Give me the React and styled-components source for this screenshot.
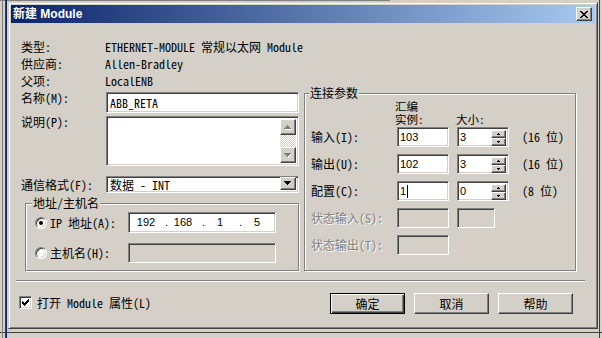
import React from "react";
import styled, { createGlobalStyle } from "styled-components";

const FACE = "#d4d0c8";
const SONG = `"Noto Sans Mono CJK SC", "Liberation Mono", "Noto Sans CJK SC", monospace`;
const SANS = `"Liberation Sans", "Noto Sans CJK SC", sans-serif`;

const Global = createGlobalStyle`
  html, body { margin: 0; padding: 0; background: ${FACE}; }
  body { width: 602px; height: 338px; overflow: hidden; font-family: ${SONG}; font-size: 12px; line-height: 12px; color: #000; }
  * { box-sizing: border-box; }
`;

const Screen = styled.div`
  width: 602px;
  height: 338px;
  padding: 2px 0 0 8px;
  display: flex;
  background:
    linear-gradient(to right, transparent 2px, #808080 2px, #808080 3px, transparent 3px, transparent 5px, #404040 5px, #404040 6px, #0a246a 6px, #0a246a 7px, transparent 7px) left top / 8px 100% no-repeat,
    linear-gradient(#404040, #404040) 0 332px / 602px 1px no-repeat,
    linear-gradient(to right, transparent 1px, #404040 1px, #404040 2px, transparent 2px) 598px 0 / 4px 100% no-repeat,
    linear-gradient(#808080, #808080) 0 0 / 390px 1px no-repeat,
    ${FACE};
`;

const Dialog = styled.div`
  width: 590px;
  height: 327px;
  background: ${FACE};
  border: 1px solid;
  border-color: ${FACE} #404040 #404040 ${FACE};
  box-shadow: inset 1px 1px 0 #fff, inset -1px -1px 0 #808080;
  padding: 2px;
  display: flex;
  flex-direction: column;
`;

const TitleBar = styled.div`
  height: 18px;
  flex: none;
  display: flex;
  align-items: center;
  justify-content: space-between;
  padding: 0 3px 0 2px;
  background: linear-gradient(to right, #0a246a, #a6caf0);
`;

const TitleText = styled.span`
  color: #fff;
  font-family: ${SANS};
  font-weight: bold;
  font-size: 12px;
  line-height: 14px;
`;

const Raised = styled.div`
  background: ${FACE};
  border: 1px solid;
  border-color: #fff #404040 #404040 #fff;
  box-shadow: inset -1px -1px 0 #808080;
  display: flex;
  align-items: center;
  justify-content: center;
`;

const CloseBtn = styled(Raised)`
  width: 16px;
  height: 14px;
`;

const Svg = styled.svg`
  display: block;
  flex: none;
`;

const Body = styled.div`
  flex: 1;
  display: flex;
  flex-direction: column;
`;

const Top = styled.div`
  padding: 15px 19px 0 10px;
`;

const Info = styled.div`
  display: grid;
  grid-template-columns: 84px 1fr;
  grid-auto-rows: 17px;
  align-items: center;
  white-space: nowrap;
`;

const Text = styled.span`
  white-space: nowrap;
  color: ${p => (p.$disabled ? "#808080" : "#000")};
  text-shadow: ${p => (p.$disabled ? "1px 1px 0 #fff" : "none")};
`;

const Main = styled.div`
  display: flex;
  gap: 5px;
  align-items: flex-start;
`;

const LeftCol = styled.div`
  width: 278px;
  padding-top: 3px;
  display: flex;
  flex-direction: column;
`;

const FormRow = styled.div`
  display: flex;
  align-items: ${p => (p.$center ? "center" : "flex-start")};
  margin-bottom: ${p => p.$mb || 0}px;
`;

const RowLabel = styled.span`
  width: 85px;
  flex: none;
  white-space: nowrap;
`;

const Field = styled.div`
  position: relative;
  flex: none;
  width: ${p => p.$w}px;
  height: ${p => p.$h || 20}px;
  background: ${p => (p.$disabled ? FACE : "#fff")};
  border: 1px solid;
  border-color: #808080 #fff #fff #808080;
  box-shadow: inset 1px 1px 0 #404040, inset -1px -1px 0 ${FACE};
  display: flex;
  align-items: ${p => (p.$top ? "stretch" : "center")};
  padding: ${p => p.$pad || "0 2px 0 2px"};
  overflow: hidden;
`;

const Num = styled.span`
  font-family: ${SANS};
  font-size: 11px;
  line-height: 13px;
  white-space: nowrap;
`;

const Caret = styled.span`
  width: 1px;
  height: 13px;
  background: #000;
  margin-left: 1px;
`;

const ScrollBar = styled.div`
  margin-left: auto;
  width: 16px;
  display: flex;
  flex-direction: column;
  background: repeating-conic-gradient(#fff 0 25%, ${FACE} 0 50%) 0 0 / 2px 2px;
`;

const ScrollBtn = styled(Raised)`
  width: 16px;
  height: ${p => p.$h || 16}px;
  flex: none;
`;

const Track = styled.div`
  flex: 1;
`;

const Group = styled.div`
  position: relative;
  border: 1px solid #808080;
  box-shadow: inset 1px 1px 0 #fff, 1px 1px 0 #fff;
  padding: ${p => p.$pad};
  margin: ${p => p.$margin || 0};
  width: ${p => p.$w}px;
`;

const Caption = styled.span`
  position: absolute;
  top: -7px;
  left: ${p => p.$left}px;
  padding: 0 1px;
  background: ${FACE};
  line-height: 12px;
  white-space: nowrap;
`;

const AddrRow = styled.div`
  display: flex;
  align-items: center;
  height: ${p => p.$h}px;
  margin-bottom: ${p => p.$mb || 0}px;
`;

const RadioBox = styled.span`
  width: 12px;
  height: 12px;
  border-radius: 50%;
  border: 1px solid;
  border-color: #808080 #fff #fff #808080;
  box-shadow: inset 1px 1px 0 #404040, inset -1px -1px 0 ${FACE};
  background: #fff;
  display: flex;
  align-items: center;
  justify-content: center;
  margin-right: 3px;
  flex: none;
`;

const Dot = styled.span`
  width: 4px;
  height: 4px;
  border-radius: 50%;
  background: #000;
`;

const AddrLabel = styled.span`
  width: 78px;
  flex: none;
  white-space: nowrap;
`;

const Octet = styled.span`
  width: 30px;
  text-align: center;
  font-family: ${SANS};
  font-size: 11px;
  line-height: 13px;
`;

const IpDot = styled.span`
  width: 7px;
  text-align: right;
  font-family: ${SANS};
  font-size: 11px;
  line-height: 13px;
`;

const ConnHeader = styled.div`
  display: grid;
  grid-template-columns: 78px 52px 52px;
  column-gap: 8px;
  height: 27px;
  align-items: end;
  padding-bottom: 2px;
`;

const HeadCell = styled.div`
  margin-left: ${p => p.$ml || 0}px;
  display: flex;
  flex-direction: column;
`;

const HeadLine = styled.span`
  height: 13px;
  line-height: 13px;
  font-size: 11.5px;
  white-space: nowrap;
`;

const ConnGrid = styled.div`
  display: grid;
  grid-template-columns: 78px 52px 52px auto;
  column-gap: 8px;
  grid-auto-rows: 20px;
  row-gap: 7px;
  align-items: center;
`;

const Bits = styled.span`
  padding-left: 5px;
  white-space: nowrap;
`;

const SpinCol = styled.div`
  margin-left: auto;
  display: flex;
  flex-direction: column;
  align-self: stretch;
`;

const SpinBtn = styled(Raised)`
  width: 15px;
  height: 8px;
  flex: none;
`;

const Separator = styled.div`
  margin: 9px 10px 0 5px;
  height: 2px;
  border-top: 1px solid #808080;
  border-bottom: 1px solid #fff;
`;

const Footer = styled.div`
  padding: 11px 22px 0 8px;
  display: flex;
  align-items: center;
  justify-content: space-between;
`;

const CheckLabel = styled.div`
  display: flex;
  align-items: center;
  gap: 5px;
  margin-top: -2px;
`;

const CheckBox = styled.span`
  width: 13px;
  height: 13px;
  border: 1px solid;
  border-color: #808080 #fff #fff #808080;
  box-shadow: inset 1px 1px 0 #404040, inset -1px -1px 0 ${FACE};
  background: #fff;
  display: flex;
  align-items: center;
  justify-content: center;
`;

const Buttons = styled.div`
  display: flex;
  gap: 9px;
`;

const Button = styled.div`
  width: 75px;
  height: 21px;
  background: ${FACE};
  border: 1px solid;
  border-color: ${p => (p.$default ? "#000" : "#fff #404040 #404040 #fff")};
  box-shadow: ${p =>
    p.$default
      ? "inset 1px 1px 0 #fff, inset -1px -1px 0 #404040, inset -2px -2px 0 #808080"
      : "inset -1px -1px 0 #808080"};
  display: flex;
  align-items: center;
  justify-content: center;
  font-family: "Noto Sans CJK SC", sans-serif;
  font-size: 12px;
`;

const Tri = ({ dir = "down", w = 7, h = 4, color = "#000", shadow = false }) => {
  const pts = dir === "down" ? `0,0 ${w},0 ${w / 2},${h}` : `0,${h} ${w},${h} ${w / 2},0`;
  return (
    <Svg width={w + 1} height={h + 1} viewBox={`0 0 ${w + 1} ${h + 1}`} shapeRendering="crispEdges">
      {shadow && <polygon points={pts} fill="#fff" transform="translate(1,1)" />}
      <polygon points={pts} fill={color} />
    </Svg>
  );
};

const CloseX = () => (
  <Svg width="8" height="7" viewBox="0 0 8 7" shapeRendering="crispEdges">
    <path d="M0 0h2v1h-2zM6 0h2v1h-2zM1 1h2v1h-2zM5 1h2v1h-2zM2 2h4v1h-4zM3 3h2v1h-2zM2 4h4v1h-4zM1 5h2v1h-2zM5 5h2v1h-2zM0 6h2v1h-2zM6 6h2v1h-2z" fill="#000" />
  </Svg>
);

const Check = () => (
  <Svg width="7" height="7" viewBox="0 0 7 7" shapeRendering="crispEdges">
    <path d="M0 2h1v3h-1zM1 3h1v3h-1zM2 4h1v3h-1zM3 3h1v3h-1zM4 2h1v3h-1zM5 1h1v3h-1zM6 0h1v3h-1z" fill="#000" />
  </Svg>
);

const Spin = () => (
  <SpinCol>
    <SpinBtn><Tri dir="up" w={4} h={2} /></SpinBtn>
    <SpinBtn><Tri dir="down" w={4} h={2} /></SpinBtn>
  </SpinCol>
);

const Radio = ({ checked }) => <RadioBox>{checked && <Dot />}</RadioBox>;

const conn = [
  { label: "输入(I):", inst: "103", size: "3", bits: "(16 位)" },
  { label: "输出(U):", inst: "102", size: "3", bits: "(16 位)" },
  { label: "配置(C):", inst: "1", size: "0", bits: "(8 位)", caret: true },
];

export default function App() {
  return (
    <>
      <Global />
      <Screen>
        <Dialog>
          <TitleBar>
            <TitleText>新建 Module</TitleText>
            <CloseBtn><CloseX /></CloseBtn>
          </TitleBar>
          <Body>
            <Top>
              <Info>
                <Text>类型:</Text><Text>ETHERNET-MODULE 常规以太网 Module</Text>
                <Text>供应商:</Text><Text>Allen-Bradley</Text>
                <Text>父项:</Text><Text>LocalENB</Text>
              </Info>
              <Main>
                <LeftCol>
                  <FormRow $mb={3}>
                    <RowLabel>名称(M):</RowLabel>
                    <Field $w={193} $h={21} $pad="0 2px 0 3px"><Text>ABB_RETA</Text></Field>
                  </FormRow>
                  <FormRow $mb={10}>
                    <RowLabel>说明(P):</RowLabel>
                    <Field $w={193} $h={50} $top $pad="2px 2px 2px 2px">
                      <ScrollBar>
                        <ScrollBtn><Tri dir="up" color="#808080" shadow /></ScrollBtn>
                        <Track />
                        <ScrollBtn><Tri dir="down" color="#808080" shadow /></ScrollBtn>
                      </ScrollBar>
                    </Field>
                  </FormRow>
                  <FormRow $center $mb={10}>
                    <RowLabel>通信格式(F):</RowLabel>
                    <Field $w={193} $h={17} $pad="0 2px 0 3px">
                      <Text>数据 - INT</Text>
                      <SpinCol>
                        <ScrollBtn $h={13}><Tri dir="down" /></ScrollBtn>
                      </SpinCol>
                    </Field>
                  </FormRow>
                  <Group $pad="8px 0 7px 9px" $margin="0 0 0 4px" $w={274}>
                    <Caption $left={6}>地址/主机名</Caption>
                    <AddrRow $h={21} $mb={10}>
                      <Radio checked />
                      <AddrLabel>IP 地址(A):</AddrLabel>
                      <Field $w={148} $h={21} $pad="0 2px 0 2px">
                        <Octet>192</Octet><IpDot>.</IpDot>
                        <Octet>168</Octet><IpDot>.</IpDot>
                        <Octet>1</Octet><IpDot>.</IpDot>
                        <Octet>5</Octet>
                      </Field>
                    </AddrRow>
                    <AddrRow $h={20}>
                      <Radio />
                      <AddrLabel>主机名(H):</AddrLabel>
                      <Field $w={148} $h={20} $disabled />
                    </AddrRow>
                  </Group>
                </LeftCol>
                <Group $pad="6px 0 15px 6px" $margin="4px 0 0 0" $w={272}>
                  <Caption $left={4}>连接参数</Caption>
                  <ConnHeader>
                    <span />
                    <HeadCell $ml={-2}>
                      <HeadLine>汇编</HeadLine>
                      <HeadLine>实例:</HeadLine>
                    </HeadCell>
                    <HeadCell $ml={-1}>
                      <HeadLine>大小:</HeadLine>
                    </HeadCell>
                  </ConnHeader>
                  <ConnGrid>
                    {conn.map(r => (
                      <React.Fragment key={r.label}>
                        <Text>{r.label}</Text>
                        <Field $w={52} $pad="0 2px 0 2px">
                          <Num>{r.inst}</Num>
                          {r.caret && <Caret />}
                        </Field>
                        <Field $w={52} $pad="2px 2px 2px 2px">
                          <Num>{r.size}</Num>
                          <Spin />
                        </Field>
                        <Bits>{r.bits}</Bits>
                      </React.Fragment>
                    ))}
                    <Text $disabled>状态输入(S):</Text>
                    <Field $w={52} $disabled />
                    <Field $w={38} $disabled />
                    <span />
                    <Text $disabled>状态输出(T):</Text>
                    <Field $w={52} $disabled />
                    <span />
                    <span />
                  </ConnGrid>
                </Group>
              </Main>
            </Top>
            <Separator />
            <Footer>
              <CheckLabel>
                <CheckBox><Check /></CheckBox>
                <Text>打开 Module 属性(L)</Text>
              </CheckLabel>
              <Buttons>
                <Button $default>确定</Button>
                <Button>取消</Button>
                <Button>帮助</Button>
              </Buttons>
            </Footer>
          </Body>
        </Dialog>
      </Screen>
    </>
  );
}
